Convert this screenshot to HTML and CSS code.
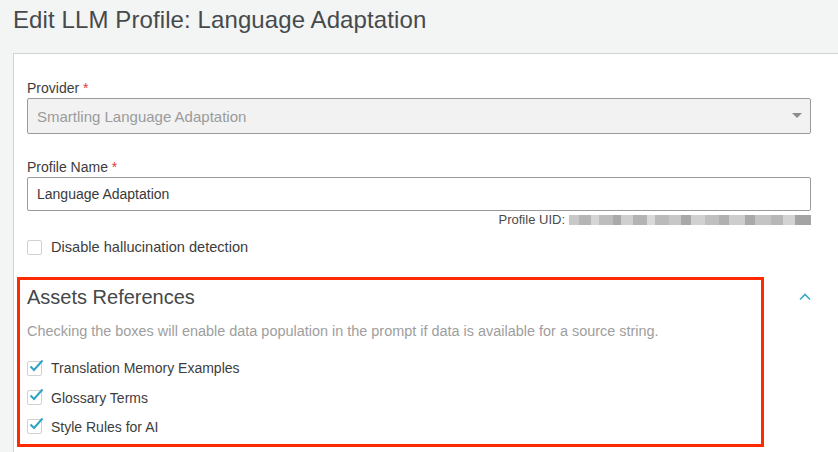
FILE: index.html
```html
<!DOCTYPE html>
<html>
<head>
<meta charset="utf-8">
<link rel="stylesheet" href="styles.css">
</head>
<body>
<h1 class="page-title">Edit LLM Profile: Language Adaptation</h1>
<div class="panel">
  <div class="field">
    <label class="label">Provider <span class="req">*</span></label>
    <div class="select">
      <span>Smartling Language Adaptation</span>
      <svg class="caret" width="10" height="6" viewBox="0 0 10 6"><path d="M0 0h10L5 5z" fill="#8c8c8c"/></svg>
    </div>
  </div>
  <div class="field field-name">
    <label class="label">Profile Name <span class="req">*</span></label>
    <div class="input">Language Adaptation</div>
    <div class="uid"><span>Profile UID:</span><span class="blur"></span></div>
  </div>
  <div class="check-row">
    <span class="box"></span>
    <span>Disable hallucination detection</span>
  </div>
  <div class="assets">
    <div class="assets-head">
      <h2 class="assets-title">Assets References</h2>
      <svg class="chev" width="12" height="8" viewBox="0 0 12 8"><path d="M1 6.5L6 1.5l5 5" fill="none" stroke="#3aa8c8" stroke-width="1.6"/></svg>
    </div>
    <p class="desc">Checking the boxes will enable data population in the prompt if data is available for a source string.</p>
    <div class="check-row checked">
      <span class="box"><svg class="tick" width="16" height="14" viewBox="0 0 16 14"><path d="M2.5 7.5l3.5 3.5L14.5 1.5" fill="none" stroke="#2fa3c4" stroke-width="2"/></svg></span>
      <span>Translation Memory Examples</span>
    </div>
    <div class="check-row checked">
      <span class="box"><svg class="tick" width="16" height="14" viewBox="0 0 16 14"><path d="M2.5 7.5l3.5 3.5L14.5 1.5" fill="none" stroke="#2fa3c4" stroke-width="2"/></svg></span>
      <span>Glossary Terms</span>
    </div>
    <div class="check-row checked">
      <span class="box"><svg class="tick" width="16" height="14" viewBox="0 0 16 14"><path d="M2.5 7.5l3.5 3.5L14.5 1.5" fill="none" stroke="#2fa3c4" stroke-width="2"/></svg></span>
      <span>Style Rules for AI</span>
    </div>
    <div class="highlight"></div>
  </div>
</div>
</body>
</html>
```

FILE: styles.css
```css
html, body {
  margin: 0;
  padding: 0;
  background: #f3f4f4;
  font-family: "Liberation Sans", Arial, sans-serif;
  color: #3d3d3d;
  overflow: hidden;
  height: 452px;
}
.page-title {
  margin: 0;
  padding: 6px 0 0 13px;
  height: 47px;
  font-size: 24px;
  font-weight: normal;
  color: #474a4c;
  line-height: 28px;
  letter-spacing: 0.1px;
}
.panel {
  margin-left: 13px;
  background: #fff;
  border-left: 1px solid #d0d2d3;
  border-top: 1px solid #d0d2d3;
  padding: 25px 27px 0 13px;
  height: 373px;
}
.label {
  display: block;
  font-size: 14px;
  line-height: 18px;
  color: #3d3d3d;
}
.req { color: #e0393e; }
.select {
  margin-top: 1px;
  height: 34px;
  border: 1px solid #9a9a9a;
  border-radius: 2px;
  background: #f2f2f2;
  display: flex;
  align-items: center;
  justify-content: space-between;
  padding: 0 8px 0 9px;
  font-size: 15px;
  color: #9b9b9b;
}
.field-name { margin-top: 24px; }
.input {
  margin-top: 1px;
  height: 32px;
  border: 1px solid #9a9a9a;
  border-radius: 2px;
  display: flex;
  align-items: center;
  padding-left: 9px;
  font-size: 14px;
  color: #3a3a3a;
}
.uid {
  display: flex;
  justify-content: flex-end;
  align-items: center;
  gap: 4px;
  font-size: 13px;
  height: 17px;
  color: #4a4a4a;
}
.blur {
  width: 242px;
  height: 10px;
  background: linear-gradient(90deg,
    #c8c8c8 0 10px, #b5b5b5 10px 22px, #d5d5d5 22px 30px, #bdbdbd 30px 44px,
    #a9a9a9 44px 52px, #cfcfcf 52px 64px, #b3b3b3 64px 78px, #d9d9d9 78px 86px,
    #bababa 86px 100px, #c7c7c7 100px 112px, #a8a8a8 112px 122px, #d1d1d1 122px 136px,
    #bfbfbf 136px 150px, #b0b0b0 150px 160px, #cdcdcd 160px 176px, #a9a9a9 176px 186px,
    #c4c4c4 186px 202px, #b7b7b7 202px 214px, #d3d3d3 214px 226px, #a4a4a4 226px 242px);
}
.check-row {
  display: flex;
  align-items: center;
  gap: 9px;
  font-size: 14px;
  line-height: 18px;
  color: #3d3d3d;
}
.panel > .check-row { margin-top: 10px; }
.panel > .check-row span:last-child { font-size: 14.6px; }
.box {
  position: relative;
  width: 13px;
  height: 13px;
  border: 1px solid #cfd1d2;
  border-radius: 2px;
  background: #fff;
  flex: none;
}
.tick {
  position: absolute;
  left: 0;
  top: -3px;
}
.assets {
  position: relative;
  margin-top: 29px;
}
.assets-head {
  display: flex;
  justify-content: space-between;
  align-items: center;
  height: 24px;
}
.assets-title {
  margin: 0;
  font-size: 20px;
  font-weight: normal;
  color: #454849;
}
.desc {
  margin: 0;
  padding-top: 13px;
  font-size: 14.45px;
  line-height: 18px;
  color: #9e9e9e;
  height: 31px;
}
.assets .check-row { height: 30px; }
.assets .check-row + .check-row { height: 29px; }
.assets .check-row:nth-of-type(1) { margin-top: 2px; }
.highlight {
  position: absolute;
  left: -10px;
  top: -8px;
  width: 741px;
  height: 164px;
  border: 3px solid #ff2a00;
  pointer-events: none;
}
```
